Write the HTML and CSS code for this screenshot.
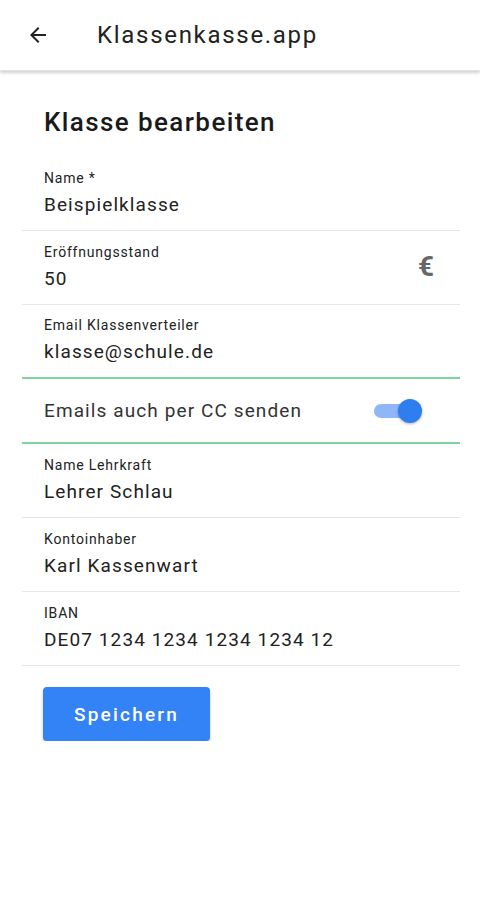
FILE: index.html
```html
<!DOCTYPE html>
<html>
  <head>
    <title>Klassenkasse.app</title>
    <link rel="stylesheet" href="styles.css">
  </head>
  <body>
    <div class="topbar">
      <svg class="back" width="24" height="24" viewBox="0 0 24 24">
        <path d="M20 11H7.83l5.59-5.59L12 4l-8 8 8 8 1.41-1.41L7.83 13H20v-2z" fill="#222"/>
      </svg>
      <div class="apptitle">Klassenkasse.app</div>
    </div>
    <div class="form">
      <h2 class="heading">Klasse bearbeiten</h2>
      <div class="field">
        <div class="label">Name *</div>
        <div class="value">Beispielklasse</div>
      </div>
      <div class="field with-icon">
        <div>
          <div class="label">Eröffnungsstand</div>
          <div class="value">50</div>
        </div>
        <span class="euro">€</span>
      </div>
      <div class="field green">
        <div class="label">Email Klassenverteiler</div>
        <div class="value">klasse@schule.de</div>
      </div>
      <div class="switch-row">
        <span>Emails auch per CC senden</span>
        <span class="switch"><span class="knob"></span></span>
      </div>
      <div class="field">
        <div class="label">Name Lehrkraft</div>
        <div class="value">Lehrer Schlau</div>
      </div>
      <div class="field">
        <div class="label">Kontoinhaber</div>
        <div class="value">Karl Kassenwart</div>
      </div>
      <div class="field">
        <div class="label">IBAN</div>
        <div class="value">DE07 1234 1234 1234 1234 12</div>
      </div>
      <div class="actions">
        <button class="save">Speichern</button>
      </div>
    </div>
  </body>
</html>
```

FILE: styles.css
```css
body{
  margin:0;
  font-family: Roboto, "Noto Sans", sans-serif;
  color:#222;
  background:#fff;
}
.topbar{
  height:70px;
  display:flex;
  align-items:center;
  padding-left:26px;
  box-shadow:0 2px 3px rgba(0,0,0,0.18);
  border-bottom:1px solid #e2e2e2;
}
.back{
  margin-right:47px;
}
.apptitle{
  font-size:24px;
  letter-spacing:1.7px;
  color:#222;
}
.form{
  margin:0 20px 0 22px;
}
.heading{
  font-size:26px;
  font-weight:500;
  letter-spacing:1.4px;
  margin:36px 0 20px 22px;
  color:#1a1a1a;
}
.field{
  padding:0 22px 2px;
  height:74px;
  border-bottom:1px solid #e6e6e6;
  box-sizing:border-box;
  display:flex;
  flex-direction:column;
  justify-content:center;
}
.field.green{
  border-bottom:2px solid #7fd3a0;
}
.field.with-icon{
  flex-direction:row;
  align-items:center;
  justify-content:space-between;
}
.label{
  font-size:14px;
  letter-spacing:0.8px;
  color:#222;
  margin-bottom:7px;
}
.value{
  font-size:19px;
  letter-spacing:1.1px;
  color:#222;
}
.euro{
  font-size:28px;
  font-weight:bold;
  color:#666;
  margin-right:4px;
}
.switch-row{
  height:65px;
  padding:0 50px 0 22px;
  display:flex;
  align-items:center;
  justify-content:space-between;
  border-bottom:2px solid #7fd3a0;
  box-sizing:border-box;
  font-size:19px;
  letter-spacing:1.1px;
  color:#333;
}
.switch{
  position:relative;
  width:36px;
  height:14px;
  border-radius:7px;
  background:#8fb7f8;
}
.knob{
  position:absolute;
  right:-12px;
  top:-5px;
  width:24px;
  height:24px;
  border-radius:50%;
  background:#2f7ef0;
  box-shadow:0 1px 3px rgba(0,0,0,0.3);
}
.actions{
  padding:21px 0 0 21px;
}
.save{
  width:167px;
  height:54px;
  border:none;
  border-radius:4px;
  background:#3383f6;
  color:#fff;
  font-family: Roboto, sans-serif;
  font-size:19px;
  font-weight:500;
  letter-spacing:2.2px;
  box-shadow:0 2px 3px rgba(0,0,0,0.25);
}
```
